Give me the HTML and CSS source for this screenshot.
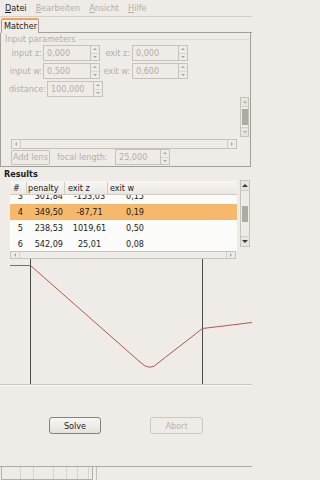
FILE: index.html
```html
<!DOCTYPE html>
<html>
<head>
<meta charset="utf-8">
<link rel="stylesheet" href="styles.css">
</head>
<body>
<div class="win">
  <div class="menubar">
    <span class="mi"><u>D</u>atei</span>
    <span class="mi dis"><u>B</u>earbeiten</span>
    <span class="mi dis"><u>A</u>nsicht</span>
    <span class="mi dis"><u>H</u>ilfe</span>
  </div>
  <div class="tabs">
    <div class="tab">Matcher</div>
    <div class="tabfill"></div>
  </div>
  <div class="panel">
    <div class="ftitle"><span>Input parameters</span><span class="fline"></span></div>
    <div class="prow">
      <span class="lbl l1">input z:</span>
      <div class="spin e1"><span class="entry">0,000</span><span class="sbtn"><i class="au"></i><i class="ad"></i></span></div>
      <span class="lbl l2">exit z:</span>
      <div class="spin e2"><span class="entry">0,000</span><span class="sbtn"><i class="au"></i><i class="ad"></i></span></div>
    </div>
    <div class="prow">
      <span class="lbl l1">input w:</span>
      <div class="spin e1"><span class="entry">0,500</span><span class="sbtn"><i class="au"></i><i class="ad"></i></span></div>
      <span class="lbl l2">exit w:</span>
      <div class="spin e2"><span class="entry">0,600</span><span class="sbtn"><i class="au"></i><i class="ad"></i></span></div>
    </div>
    <div class="prow">
      <span class="lbl l3">distance:</span>
      <div class="spin e3"><span class="entry">100,000</span><span class="sbtn"><i class="au"></i><i class="ad"></i></span></div>
    </div>
    <div class="sw">
      <div class="swview"></div>
      <div class="vscroll vs1">
        <span class="sarr"><i class="au"></i></span>
        <span class="thumb"><span class="grip"></span></span>
        <span class="sarr"><i class="ad"></i></span>
      </div>
      <div class="hscroll hs1">
        <span class="sarr h"><i class="al"></i></span>
        <span class="htrack"></span>
        <span class="sarr h"><i class="ar"></i></span>
      </div>
    </div>
    <div class="lensrow">
      <span class="btn dis addlens">Add lens</span>
      <span class="lbl l4">focal length:</span>
      <div class="spin e4"><span class="entry">25,000</span><span class="sbtn"><i class="au"></i><i class="ad"></i></span></div>
    </div>
  </div>
  <div class="results">Results</div>
  <div class="tblarea">
    <div class="tbl">
      <div class="thead">
        <span class="c0 hc">#</span>
        <span class="c1 hc">penalty</span>
        <span class="c2 hc">exit z</span>
        <span class="c3 hc">exit w</span>
      </div>
      <div class="tbody">
        <div class="rows">
          <div class="tr"><span class="c0">3</span><span class="c1">301,84</span><span class="c2">-153,03</span><span class="c3">0,15</span></div>
          <div class="tr sel"><span class="c0">4</span><span class="c1">349,50</span><span class="c2">-87,71</span><span class="c3">0,19</span></div>
          <div class="tr"><span class="c0">5</span><span class="c1">238,53</span><span class="c2">1019,61</span><span class="c3">0,50</span></div>
          <div class="tr"><span class="c0">6</span><span class="c1">542,09</span><span class="c2">25,01</span><span class="c3">0,08</span></div>
        </div>
      </div>
    </div>
    <div class="vscroll vs2">
      <span class="sarr"><i class="au dark"></i></span>
      <span class="thumb"><span class="grip"></span></span>
      <span class="sarr"><i class="ad dark"></i></span>
    </div>
    <div class="hscroll hs2">
      <span class="sarr h"><i class="al"></i></span>
      <span class="htrack"></span>
      <span class="sarr h"><i class="ar"></i></span>
    </div>
  </div>
  <svg class="graph" width="252" height="125" viewBox="0 0 252 125">
    <line x1="30.5" y1="0" x2="30.5" y2="125" stroke="#4e4c49" stroke-width="1"/>
    <line x1="202.5" y1="0" x2="202.5" y2="125" stroke="#4e4c49" stroke-width="1"/>
    <path d="M10,6.5 H30.5 L140,103 Q150,113 158,104 L202.5,69.5 L252,63.5" fill="none" stroke="#b2545c" stroke-width="1"/>
  </svg>
  <div class="gsep"></div>
  <div class="btnarea">
    <span class="pbtn">Solve</span>
    <span class="pbtn dis">Abort</span>
  </div>
  <div class="status">
    <div class="prog"><i></i><i></i><i></i><i></i><i></i><i></i></div>
    <div class="stmsg"></div>
  </div>
</div>
</body>
</html>
```
FILE: styles.css
```css
* { box-sizing: border-box; margin: 0; padding: 0; }
html, body { width: 252px; height: 480px; overflow: hidden; }
body {
  background: #efebe7;
  font-family: "DejaVu Sans Condensed", "DejaVu Sans", sans-serif;
  font-stretch: semi-condensed;
  font-size: 9px;
  color: #1c1c1c;
}
.win { display: flex; flex-direction: column; height: 480px; }

/* menu */
.menubar {
  height: 17px; flex: none;
  display: flex; align-items: center; gap: 9px;
  padding-left: 5px;
  border-bottom: 1px solid #d3cfca;
}
.mi { line-height: 12px; }
.mi u { text-decoration: underline; text-underline-offset: 1px; }
.dis { color: #b3afa8; }

/* notebook */
.tabs { height: 16px; flex: none; display: flex; align-items: flex-end; }
.tab {
  width: 38px; height: 15px; margin-left: 1px;
  border: 1px solid #a29e98; border-bottom: none;
  border-top: 2px solid #efa25a;
  border-radius: 2px 2px 0 0;
  padding-left: 2px; line-height: 12px;
}
.tabfill { flex: 1; height: 1px; border-bottom: 1px solid #a29e98; }
.panel {
  width: 251px; height: 134px; flex: none;
  border: 1px solid #a29e98; border-top: none;
  display: flex; flex-direction: column;
}
.ftitle {
  height: 12px; display: flex; align-items: center;
  padding-left: 4px; color: #b3afa8;
}
.fline { flex: 1; height: 1px; background: #dcd8d3; margin: 1px 1px 0 3px; }

.prow { height: 16px; display: flex; align-items: center; margin-bottom: 2px; }
.prow:nth-of-type(4) { margin-bottom: 0; }
.lbl { color: #b3afa8; white-space: nowrap; }
.l1 { width: 42px; text-align: right; padding-right: 1px; }
.l2 { width: 31px; text-align: right; padding-right: 1px; margin-right: 1px; }
.l3 { width: 46px; text-align: right; padding-right: 1px; }
.l4 { width: 65px; padding-left: 7px; }

.spin { display: flex; height: 16px; }
.entry {
  border: 1px solid #c6c2bc; border-right: none;
  background: #efebe7; color: #b3afa8;
  padding-left: 3px; line-height: 14px;
}
.sbtn {
  width: 10px; border: 1px solid #c6c2bc;
  display: flex; flex-direction: column;
}
.sbtn i { flex: 1; display: flex; align-items: center; justify-content: center; }
.sbtn i + i { border-top: 1px solid #dad6d1; }
.e1 .entry { width: 47px; }
.e2 .entry { width: 46px; }
.e3 .entry { width: 46px; }
.e4 .entry { width: 45px; }

/* arrows */
.au::after, .ad::after, .al::after, .ar::after { content: ""; width: 0; height: 0; display: block; }
.au::after { border-left: 2px solid transparent; border-right: 2px solid transparent; border-bottom: 2px solid #aaa69f; }
.ad::after { border-left: 2px solid transparent; border-right: 2px solid transparent; border-top: 2px solid #aaa69f; }
.al::after { border-top: 2px solid transparent; border-bottom: 2px solid transparent; border-right: 2px solid #aaa69f; }
.ar::after { border-top: 2px solid transparent; border-bottom: 2px solid transparent; border-left: 2px solid #aaa69f; }
.au.dark::after { border-bottom-color: #3a3936; border-left-width: 3px; border-right-width: 3px; border-bottom-width: 3px; }
.ad.dark::after { border-top-color: #3a3936; border-left-width: 3px; border-right-width: 3px; border-top-width: 3px; }

/* scrolled window */
.sw {
  display: grid;
  grid-template-columns: 226px 9px;
  grid-template-rows: 40px 10px;
  column-gap: 3px; row-gap: 2px;
  padding-left: 10px; height: 52px;
}
.vscroll {
  display: flex; flex-direction: column;
  border: 1px solid #c6c2bc; background: #e8e4df;
}
.vscroll .sarr { height: 8px; display: flex; align-items: center; justify-content: center; }
.vscroll .thumb {
  flex: 1; display: flex; align-items: center; justify-content: center;
  border-top: 1px solid #d2cec8; border-bottom: 1px solid #d2cec8;
  background: #efebe7;
}
.grip {
  width: 6px; height: 16px;
  background-image: radial-gradient(circle, #aca8a2 0.7px, transparent 0.9px);
  background-size: 2px 2px;
}
.hscroll {
  display: flex; border: 1px solid #c6c2bc; background: #efebe7;
}
.hscroll .sarr.h { width: 9px; display: flex; align-items: center; justify-content: center; }
.hscroll .sarr.h:first-child { border-right: 1px solid #d2cec8; }
.hscroll .sarr.h:last-child { border-left: 1px solid #d2cec8; }
.htrack { flex: 1; }
.vs1 { grid-column: 2; grid-row: 1; }
.hs1 { grid-column: 1; grid-row: 2; }

.lensrow { height: 16px; display: flex; align-items: center; padding-left: 10px; }
.btn {
  height: 15px; border: 1px solid #c6c2bc; border-radius: 2px;
  display: flex; align-items: center; justify-content: center;
}
.addlens { width: 39px; }

/* results */
.results {
  height: 14px; flex: none;
  font-weight: bold; padding-left: 4px; line-height: 15px;
}
.tblarea {
  height: 78px; flex: none;
  display: grid;
  grid-template-columns: 227px 10px;
  grid-template-rows: 70px 8px;
  column-gap: 3px;
  padding-left: 10px;
}
.tbl { grid-column: 1; grid-row: 1; display: flex; flex-direction: column; }
.thead {
  height: 14px; display: flex; align-items: center;
  background: linear-gradient(#f7f6f4, #ebe8e4);
  border-bottom: 1px solid #cfcbc5;
}
.hc { height: 12px; line-height: 12px; }
.hc + .hc { border-left: 1px solid #cfcbc5; }
.c0 { width: 16px; flex: none; }
.c1 { width: 38px; flex: none; }
.c2 { width: 43px; flex: none; }
.c3 { flex: 1; }
.thead .c0 { padding-left: 3px; }
.thead .c1 { padding-left: 1px; }
.thead .c2 { padding-left: 3px; }
.thead .c3 { padding-left: 2px; }
.tbody { flex: 1; overflow: hidden; background: #fbfbfa; }
.rows { margin-top: -7px; }
.tr { height: 16px; display: flex; align-items: center; }
.tr.sel { background: #f6b96c; }
.tr .c0 { text-align: right; padding-right: 3px; }
.tr .c1 { text-align: right; padding-right: 1px; }
.tr .c2 { text-align: center; padding-left: 8px; }
.tr .c3 { padding-left: 19px; }
.vs2 { grid-column: 2; grid-row: 1; height: 67px; margin-top: -1px; }
.vs2 .sarr { height: 9px; }
.hs2 { grid-column: 1; grid-row: 2; height: 8px; width: 226px; }

/* graph */
.graph { display: block; flex: none; }
.gsep { height: 2px; flex: none; border-top: 1px solid #c9c5bf; border-bottom: 1px solid #f9f8f6; }

/* buttons */
.btnarea {
  flex: 1; display: flex; align-items: flex-start;
  padding: 31px 0 0 49px; gap: 49px;
}
.pbtn {
  width: 52px; height: 17px;
  border: 1px solid #86827c; border-radius: 3px;
  background: linear-gradient(#f8f7f5, #e6e2dd);
  display: flex; align-items: center; justify-content: center;
}
.pbtn.dis { width: 53px; border-color: #cbc7c1; background: #efebe7; color: #b8b4ae; }

/* status */
.status {
  height: 14px; flex: none;
  border-top: 1px solid #aeaaa4;
  display: flex; gap: 3px; padding-left: 1px;
}
.prog {
  width: 92px; border: 1px solid #b3afa9; border-top: none;
  display: flex;
}
.prog i { border-right: 1px solid #d7d3cd; }
.prog i:nth-child(1) { width: 19px; }
.prog i:nth-child(2) { width: 13px; }
.prog i:nth-child(3) { width: 20px; }
.prog i:nth-child(4) { width: 13px; }
.prog i:nth-child(5) { width: 11px; }
.prog i:nth-child(6) { width: 11px; }
.stmsg { flex: 1; border-left: 1px solid #c3bfb9; }
```
